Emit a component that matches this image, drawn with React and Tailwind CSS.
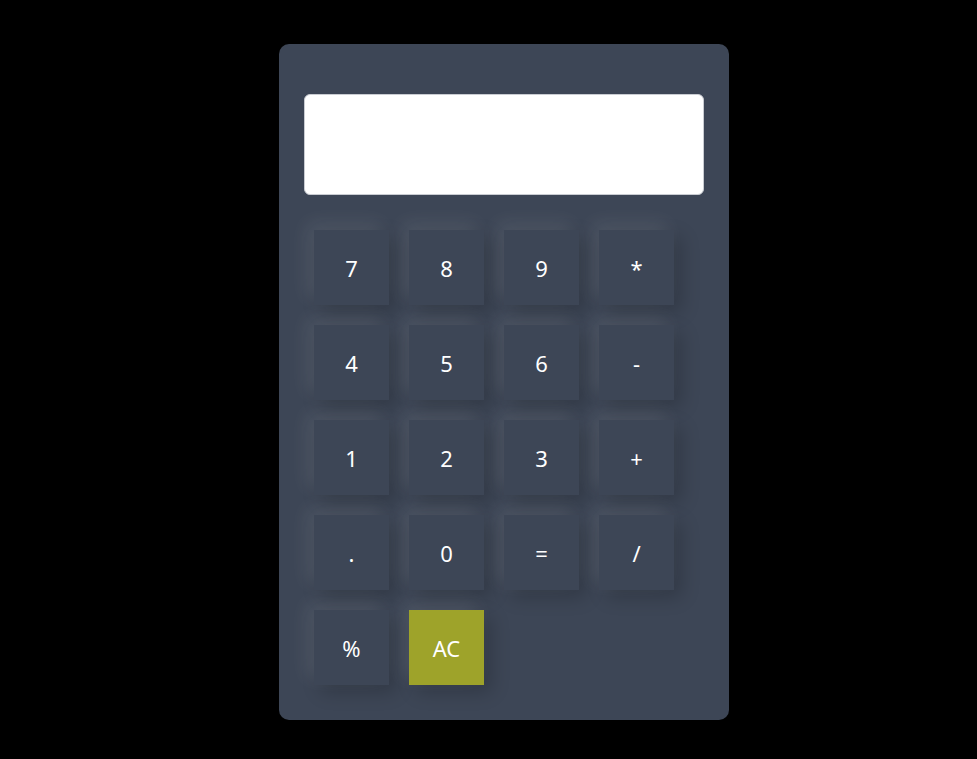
import React, { useState } from 'react';

const keys = ['7', '8', '9', '*', '4', '5', '6', '-', '1', '2', '3', '+', '.', '0', '=', '/', '%', 'AC'];

const App = () => {
  const [value, setValue] = useState('');

  const press = (k) => {
    if (k === 'AC') return setValue('');
    if (k === '=') {
      try {
        // eslint-disable-next-line no-new-func
        setValue(String(Function(`return (${value})`)()));
      } catch (e) {
        setValue('');
      }
      return;
    }
    setValue((v) => v + k);
  };

  return (
    <div className="min-h-[759px] bg-black pl-[279px] pt-[44px] font-['Noto_Sans','Open_Sans',sans-serif]">
      <div className="w-[450px] h-[676px] rounded-[10px] bg-[#3d4656] px-[25px] pt-[50px]">
        <input
          type="text"
          readOnly
          value={value}
          className="block w-[400px] h-[101px] rounded-[6px] border border-[#c9ccd2] bg-white px-3 text-right text-3xl text-gray-900 outline-none"
        />
        <div className="mt-[25px] grid grid-cols-4 w-[380px]">
          {keys.map((k) => (
            <div key={k} className="p-[10px]">
              <button
                onClick={() => press(k)}
                className={`flex h-[75px] w-[75px] items-center justify-center pt-px text-[22px] text-white shadow-[-7px_-7px_18px_rgba(255,255,255,0.09),7px_7px_18px_rgba(0,0,0,0.2)] ${
                  k === 'AC' ? 'bg-[#9ea32a]' : 'bg-[#3d4656]'
                }`}
              >
                {k}
              </button>
            </div>
          ))}
        </div>
      </div>
    </div>
  );
};

export default App;
